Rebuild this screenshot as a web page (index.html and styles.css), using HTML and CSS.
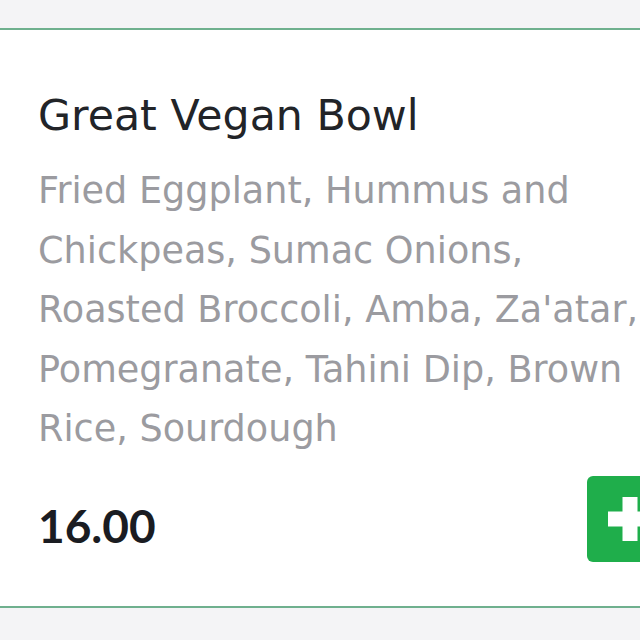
FILE: index.html
```html
<!DOCTYPE html>
<html lang="en">
<head>
<meta charset="utf-8">
<link rel="stylesheet" href="styles.css">
<title>Great Vegan Bowl</title>
</head>
<body>
<div class="page">
  <div class="card">
    <h2 class="title">Great Vegan Bowl</h2>
    <p class="desc">Fried Eggplant, Hummus and Chickpeas, Sumac Onions, Roasted Broccoli, Amba, Za'atar, Pomegranate, Tahini Dip, Brown Rice, Sourdough</p>
    <div class="footer">
      <span class="price">16.00</span>
      <button class="add" aria-label="Add">
        <svg width="44" height="44" viewBox="0 0 44 44"><rect x="14.5" y="0" width="15" height="44" fill="#fff"/><rect x="0" y="14.5" width="44" height="15" fill="#fff"/></svg>
      </button>
    </div>
  </div>
</div>
</body>
</html>
```
FILE: styles.css
```css
html, body {
  margin: 0;
  padding: 0;
  background: #f4f4f6;
  overflow: hidden;
  height: 640px;
}
.page {
  padding-top: 28px;
  width: 680px;
}
.card {
  background: #fff;
  border-top: 2px solid #6fb08e;
  border-bottom: 2px solid #6fb08e;
  padding: 57px 0 0 38px;
  height: 519px;
  box-sizing: content-box;
  font-family: "DejaVu Sans", sans-serif;
}
.title {
  margin: 0;
  font-weight: 400;
  font-size: 42.7px;
  line-height: 56px;
  color: #222428;
}
.desc {
  margin: 18px 0 0;
  font-size: 36.6px;
  line-height: 59.5px;
  color: #9b9ba0;
  width: 625px;
}
.footer {
  display: flex;
  align-items: center;
  justify-content: space-between;
  margin-top: 17px;
  width: 635px;
}
.price {
  font-family: Lato, "DejaVu Sans", sans-serif;
  font-size: 46px;
  font-weight: 700;
  color: #1a1c22;
  padding-top: 14px;
}
.add {
  width: 86px;
  height: 86px;
  border: none;
  border-radius: 6px;
  background: #1fae4b;
  display: flex;
  align-items: center;
  justify-content: center;
  padding: 0;
}
```
